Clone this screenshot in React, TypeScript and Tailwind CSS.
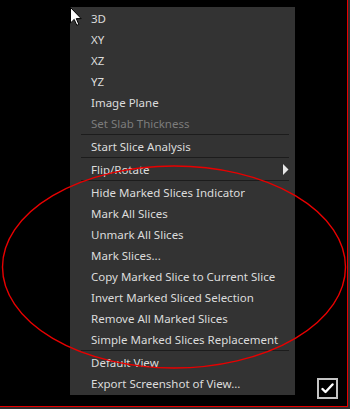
import React from "react";

type Item = { label: string; disabled?: boolean; submenu?: boolean } | "sep";

const items: Item[] = [
  { label: "3D" },
  { label: "XY" },
  { label: "XZ" },
  { label: "YZ" },
  { label: "Image Plane" },
  { label: "Set Slab Thickness", disabled: true },
  "sep",
  { label: "Start Slice Analysis" },
  "sep",
  { label: "Flip/Rotate", submenu: true },
  "sep",
  { label: "Hide Marked Slices Indicator" },
  { label: "Mark All Slices" },
  { label: "Unmark All Slices" },
  { label: "Mark Slices..." },
  { label: "Copy Marked Slice to Current Slice" },
  { label: "Invert Marked Sliced Selection" },
  { label: "Remove All Marked Slices" },
  { label: "Simple Marked Slices Replacement" },
  "sep",
  { label: "Default View" },
  { label: "Export Screenshot of View..." },
];

export default function App() {
  return (
    <div className="w-[350px] h-[409px] bg-[#2e2e2e] overflow-hidden">
      <div className="relative w-[348px] h-[407px] bg-black border-r border-b border-[#e80000] box-border">
        {/* context menu */}
        <div
          className="absolute left-[70px] top-[7px] w-[225px] bg-[#333333] py-[1px] flex flex-col"
          style={{ fontFamily: '"Noto Sans", "Open Sans", sans-serif' }}
        >
          {items.map((it, i) =>
            it === "sep" ? (
              <div key={i} className="h-[2px] flex flex-col pl-[11px] pr-[6px]">
                <div className="h-[1px] bg-[#1c1c1c]" />
              </div>
            ) : (
              <div
                key={i}
                className={`h-[21px] flex items-center pl-[21px] pr-[6px] text-[11.5px] leading-none ${
                  it.disabled ? "text-[#7c7c7c]" : "text-[#dcdcdc]"
                }`}
              >
                <span className="flex-1 whitespace-nowrap">{it.label}</span>
                {it.submenu && (
                  <svg width="6" height="11" viewBox="0 0 6 11">
                    <polygon points="0,0 5.5,5.5 0,11" fill="#e8e8e8" />
                  </svg>
                )}
              </div>
            )
          )}
        </div>

        {/* checkbox */}
        <div className="absolute left-[317px] top-[378px] w-[21px] h-[21px] border-2 border-[#c4c4c4] box-border flex items-center justify-center">
          <svg width="13" height="11" viewBox="0 0 13 11">
            <polyline
              points="1.5,6 4.5,9 11.5,1.5"
              fill="none"
              stroke="#ffffff"
              strokeWidth="2.4"
              strokeLinecap="round"
              strokeLinejoin="round"
            />
          </svg>
        </div>

        {/* red annotation ellipse */}
        <svg
          className="absolute left-0 top-0 pointer-events-none"
          width="348"
          height="407"
          viewBox="0 0 348 407"
        >
          <ellipse cx="174" cy="267" rx="171.5" ry="101" fill="none" stroke="#e80000" strokeWidth="1.4" />
        </svg>

        {/* mouse cursor */}
        <svg className="absolute left-[70px] top-[7px]" width="13" height="20" viewBox="0 0 13 20">
          <path
            d="M0.5,0.5 L0.5,16 L4.2,12.4 L6.8,18.3 L8.8,17.4 L6.3,11.6 L11.2,11.6 Z"
            fill="#ffffff"
            stroke="#000000"
            strokeWidth="1"
            strokeLinejoin="miter"
          />
        </svg>
      </div>
    </div>
  );
}
